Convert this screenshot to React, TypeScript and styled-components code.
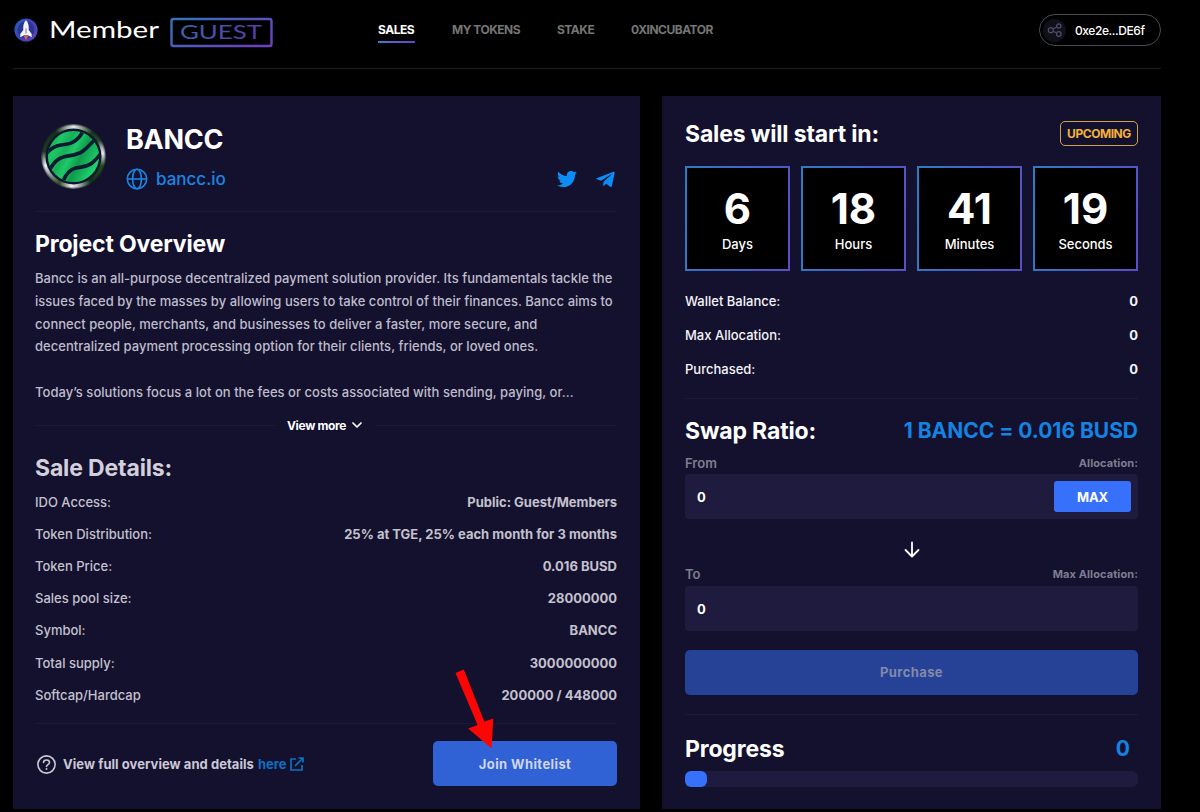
import React from "react";
import styled, { createGlobalStyle } from "styled-components";
import { FaTwitter, FaTelegramPlane } from "react-icons/fa";

const Global = createGlobalStyle`
  * { box-sizing: border-box; }
  body { margin: 0; background: #000; color: #fff; font-family: Inter, "Liberation Sans", sans-serif; overflow: hidden; }
  button { font-family: inherit; border: 0; }
  h1, h2, p { margin: 0; }
  svg { display: block; flex: none; }
`;

const Page = styled.div`
  width: 1200px;
  height: 812px;
  padding: 0 39px 0 13px;
`;

const Header = styled.header`
  height: 69px;
  display: flex;
  align-items: flex-start;
  border-bottom: 1px solid #1d1d1f;
`;

const Brand = styled.div`
  width: 365px;
  padding-top: 13px;
  display: flex;
`;

const Nav = styled.nav`
  flex: 1;
  display: flex;
  gap: 37px;
  padding-top: 20px;
`;

const NavItem = styled.a<{ $active?: boolean; $w: number }>`
  width: ${(p) => p.$w}px;
  white-space: nowrap;
  font-size: 12px;
  letter-spacing: -0.5px;
  line-height: 20px;
  font-weight: 700;
  color: ${(p) => (p.$active ? "#fff" : "#757575")};
  &::after {
    content: "";
    display: ${(p) => (p.$active ? "block" : "none")};
    height: 2px;
    margin-top: 1px;
    background: linear-gradient(90deg, #3b7fd0, #6a3fd0);
  }
`;

const Wallet = styled.div`
  width: 122px;
  height: 32px;
  margin-top: 14px;
  padding-left: 3px;
  display: flex;
  align-items: center;
  gap: 9px;
  border: 1px solid #4a4a52;
  border-radius: 16px;
  font-size: 12px;
  font-weight: 500;
  letter-spacing: -0.42px;
`;

const WalletIcon = styled.span`
  width: 23px;
  height: 23px;
  border-radius: 50%;
  background: #10101a;
  display: grid;
  place-items: center;
`;

const Main = styled.main`
  display: grid;
  grid-template-columns: 627px 499px;
  justify-content: space-between;
  padding-top: 27px;
`;

const Panel = styled.section<{ $pad: string }>`
  height: 713px;
  padding: ${(p) => p.$pad};
  background: #14112f;
  display: flex;
  flex-direction: column;
`;

const Divider = styled.hr<{ $top?: number }>`
  width: 100%;
  height: 1px;
  margin: ${(p) => p.$top ?? 0}px 0 0;
  border: 0;
  background: #1d1a38;
`;

const Heading = styled.h2<{ $dim?: boolean; $top?: number }>`
  margin-top: ${(p) => p.$top ?? 0}px;
  font-size: 23px;
  letter-spacing: -0.15px;
  line-height: 30px;
  font-weight: 700;
  white-space: nowrap;
  color: ${(p) => (p.$dim ? "#d3d0dc" : "#fff")};
`;

const Project = styled.div`
  height: 115px;
  padding: 28px 0 0 6px;
  display: flex;
`;

const CoinRim = styled.div`
  width: 65px;
  height: 65px;
  display: grid;
  place-items: center;
  border-radius: 50%;
  background: radial-gradient(closest-side, transparent 93%, rgba(20, 17, 47, 0.75) 100%), conic-gradient(
    #e8eae8 0deg, #9fab9e 14deg, #17391a 38deg, #254a28 58deg, #b4b8b6 74deg, #e6e6ea 84deg, #264a22 108deg,
    #103014 145deg, #a5aea4 168deg, #f2f2f2 184deg, #31552c 208deg, #8f9a90 232deg, #f2f2f4 252deg,
    #1d3a20 280deg, #163018 325deg, #9fab9e 346deg, #e8eae8 360deg
  );
`;

const ProjectText = styled.div`
  flex: 1;
  padding-left: 20px;
`;

const ProjectName = styled.h1`
  font-size: 27px;
  letter-spacing: -0.25px;
  line-height: 32px;
  font-weight: 700;
`;

const LinkRow = styled.div`
  display: flex;
  align-items: center;
  height: 24px;
  margin-top: 11px;
  color: #1a86e3;
`;

const Site = styled.a`
  flex: 1;
  padding-left: 8px;
  font-size: 17px;
  font-weight: 500;
`;

const Socials = styled.div`
  display: flex;
  gap: 18px;
  padding-right: 1px;
  color: #0c8df5;
`;

const Copy = styled.p`
  height: 122px;
  margin-top: 8px;
  font-size: 13px;
  letter-spacing: 0.03px;
  line-height: 22.75px;
  font-weight: 500;
  color: #bfbcca;
  white-space: pre;
`;

const MoreRow = styled.div`
  height: 24px;
  margin-top: 24px;
  display: grid;
  grid-template-columns: 240px 1fr 242px;
  align-items: center;
`;

const More = styled.button`
  padding: 0 0 0 12px;
  display: flex;
  align-items: center;
  gap: 6px;
  background: none;
  color: #fff;
  font-size: 12px;
  font-weight: 700;
  letter-spacing: -0.35px;
  white-space: nowrap;
`;

const Details = styled.dl<{ $top: number }>`
  margin: ${(p) => p.$top}px 0 0;
`;

const Detail = styled.div<{ $h: number; $dim?: boolean }>`
  height: ${(p) => p.$h}px;
  display: flex;
  align-items: center;
  justify-content: space-between;
  font-size: 13px;
  color: ${(p) => (p.$dim ? "#c4c1ce" : "#f4f4f8")};
  dt { font-weight: 500; }
  dd { margin: 0; font-weight: 700; }
`;

const PanelFoot = styled.div`
  margin-top: 17px;
  display: flex;
  align-items: center;
  justify-content: space-between;
`;

const Help = styled.div`
  display: flex;
  align-items: center;
  padding: 2px 0 0 2px;
  font-size: 13px;
  font-weight: 700;
  color: #cbc8d5;
  a { color: #0f6fc0; margin: 0 4px 0 4px; }
  span { margin-left: 7px; letter-spacing: 0.05px; }
`;

const JoinWrap = styled.div`
  position: relative;
`;

const Pointer = styled.svg`
  position: absolute;
  left: 21px;
  top: -73px;
`;

const Action = styled.button<{ $w: string; $disabled?: boolean; $top?: number }>`
  display: block;
  width: ${(p) => p.$w};
  height: 45px;
  margin-top: ${(p) => p.$top ?? 0}px;
  padding: ${(p) => (p.$disabled ? "0 0 1px" : "1px 0 0")};
  border-radius: 5px;
  font-size: 13px;
  font-weight: 700;
  letter-spacing: 0.4px;
  background: ${(p) => (p.$disabled ? "#254297" : "#3061d5")};
  color: ${(p) => (p.$disabled ? "#8488ab" : "#d0d6ee")};
`;

const Split = styled.div<{ $top: number }>`
  margin-top: ${(p) => p.$top}px;
  display: flex;
  align-items: center;
  justify-content: space-between;
`;

const Badge = styled.span`
  width: 78px;
  height: 25px;
  margin-bottom: 1px;
  display: grid;
  place-items: center;
  border: 1px solid #d3a14b;
  border-radius: 5px;
  color: #f5b13d;
  font-size: 12px;
  font-weight: 700;
  letter-spacing: -0.45px;
`;

const Clock = styled.div`
  margin-top: 17px;
  display: grid;
  grid-template-columns: repeat(4, 105px);
  justify-content: space-between;
`;

const Tile = styled.div`
  height: 105px;
  padding-top: 17px;
  border: 2px solid transparent;
  background: linear-gradient(#000, #000) padding-box, linear-gradient(100deg, #2f7cc2, #5a4ec6) border-box;
  text-align: center;
  strong { display: block; font-size: 42px; line-height: 48px; font-weight: 700; }
  span { display: block; margin-top: 1px; font-size: 13px; line-height: 20px; font-weight: 500; }
`;

const Ratio = styled.span<{ $pad?: number }>`
  padding-right: ${(p) => p.$pad ?? 0}px;
  font-size: 21px;
  line-height: 30px;
  font-weight: 700;
  letter-spacing: -0.03px;
  color: #1583e0;
`;

const FieldLabel = styled.div<{ $top: number }>`
  margin-top: ${(p) => p.$top}px;
  height: 20px;
  display: flex;
  align-items: center;
  justify-content: space-between;
  color: #7f7d91;
  font-size: 13px;
  font-weight: 600;
  small { font-size: 11px; font-weight: 700; letter-spacing: 0.1px; }
`;

const Field = styled.div<{ $top: number }>`
  height: 45px;
  margin-top: ${(p) => p.$top}px;
  padding: 0 7px 0 12px;
  display: flex;
  align-items: center;
  justify-content: space-between;
  border-radius: 4px;
  background: #1e1b3e;
  font-size: 13px;
  font-weight: 700;
`;

const Max = styled.button`
  width: 77px;
  height: 31px;
  border-radius: 3px;
  background: #3771fb;
  color: #fff;
  font-size: 13px;
  font-weight: 700;
  letter-spacing: -0.2px;
`;

const ArrowRow = styled.div`
  height: 45px;
  padding-top: 22px;
  display: flex;
  justify-content: center;
`;

const Track = styled.div`
  height: 16px;
  margin-top: 7px;
  border-radius: 6px;
  background: #1e1b3e;
`;

const Fill = styled.div`
  width: 22px;
  height: 16px;
  border-radius: 6px;
  background: #3771fb;
`;

const Logo = () => (
  <svg width="265" height="42" viewBox="13 13 265 42">
    <defs>
      <linearGradient id="brand" x1="0" x2="1" y1="0" y2="0.6">
        <stop offset="0" stopColor="#3474bd" />
        <stop offset="1" stopColor="#6a43c0" />
      </linearGradient>
      <linearGradient id="badge" x1="0" x2="1" y1="0" y2="0.6">
        <stop offset="0" stopColor="#1f63c0" />
        <stop offset="0.6" stopColor="#3c3fb4" />
        <stop offset="1" stopColor="#5a45b8" />
      </linearGradient>
      <linearGradient id="brandText" gradientUnits="userSpaceOnUse" x1="180" x2="262" y1="20" y2="40">
        <stop offset="0" stopColor="#3765a8" />
        <stop offset="1" stopColor="#5a3aa8" />
      </linearGradient>
    </defs>
    <circle cx="26" cy="30" r="11.6" fill="url(#badge)" />
    <circle cx="26" cy="30" r="8.4" fill="#2c3390" />
    <path d="M26 20c2.600 3 3 6.500 2.700 10l3 4v3.300l-3.800-2h-3.800l-3.800 2v-3.300l3-4C23 26.500 23.400 23 26 20z" fill="#f3f3f7" />
    <path d="M26 28.500v5" stroke="#6d7397" strokeWidth="1" />
    <path d="M23.400 35.400h5.200L26 40z" fill="#e2614b" />
    <text x="49" y="38" textLength="110" lengthAdjust="spacingAndGlyphs" fill="#fff" fontFamily="Lato, sans-serif" fontSize="23">Member</text>
    <rect x="171.500" y="19" width="100" height="27" rx="2" fill="none" stroke="url(#brand)" strokeWidth="2.400" />
    <text x="180" y="38.500" textLength="82" lengthAdjust="spacingAndGlyphs" fill="url(#brandText)" fontFamily="Lato, sans-serif" fontSize="19">GUEST</text>
  </svg>
);

const Coin = () => (
  <CoinRim>
    <svg width="57" height="57" viewBox="4 4 57 57">
      <defs>
        <linearGradient id="green" x1="0" y1="0" x2="1" y2="0.5">
          <stop offset="0" stopColor="#0c8a44" />
          <stop offset="0.25" stopColor="#1fc768" />
          <stop offset="0.42" stopColor="#16b058" />
          <stop offset="0.55" stopColor="#1fc96a" />
          <stop offset="0.72" stopColor="#109a4b" />
          <stop offset="1" stopColor="#1ed06c" />
        </linearGradient>
        <clipPath id="coinClip"><circle cx="32.500" cy="32.500" r="25.600" /></clipPath>
      </defs>
      <circle cx="32.500" cy="32.500" r="28" fill="#0b1730" />
      <circle cx="32.500" cy="32.500" r="25.600" fill="url(#green)" />
      <g clipPath="url(#coinClip)" fill="none" stroke="#0a1a30" strokeWidth="3.600">
        <path d="M5 30c4-5 8-8 15-9s9-.5 14-4 7-7 9.500-13" />
        <path d="M8 47c5-9 9-13 16-14.500s12-1 18-5.500 8-8 12.500-12" />
        <path d="M21 60c3-9 7-14.500 14-16s11-1 16-5 6-6 9-10" />
      </g>
    </svg>
  </CoinRim>
);

const Globe = () => (
  <svg width="22" height="22" viewBox="0 0 22 22" fill="none" stroke="currentColor" strokeWidth="1.600">
    <circle cx="11" cy="11" r="9.700" />
    <ellipse cx="11" cy="11" rx="4.400" ry="9.700" />
    <path d="M1.500 11h19" />
  </svg>
);

const details = [
  ["IDO Access:", "Public: Guest/Members"],
  ["Token Distribution:", "25% at TGE, 25% each month for 3 months"],
  ["Token Price:", "0.016 BUSD"],
  ["Sales pool size:", "28000000"],
  ["Symbol:", "BANCC"],
  ["Total supply:", "3000000000"],
  ["Softcap/Hardcap", "200000 / 448000"],
];

const overview = `Bancc is an all-purpose decentralized payment solution provider. Its fundamentals tackle the
issues faced by the masses by allowing users to take control of their finances. Bancc aims to
connect people, merchants, and businesses to deliver a faster, more secure, and
decentralized payment processing option for their clients, friends, or loved ones.

Today’s solutions focus a lot on the fees or costs associated with sending, paying, or...`;

export default function App() {
  return (
    <Page>
      <Global />
      <Header>
        <Brand><Logo /></Brand>
        <Nav>
          <NavItem $active $w={37}>SALES</NavItem>
          <NavItem $w={68}>MY TOKENS</NavItem>
          <NavItem $w={37}>STAKE</NavItem>
          <NavItem $w={82}>0XINCUBATOR</NavItem>
        </Nav>
        <Wallet>
          <WalletIcon>
            <svg width="16" height="16" viewBox="0 0 16 16" fill="none" stroke="#4f4f68" strokeWidth="1.200">
              <circle cx="3.800" cy="8.200" r="2.500" />
              <circle cx="11.800" cy="4" r="2.100" />
              <circle cx="11.800" cy="12" r="2.300" />
              <path d="M6 7l3.800-2M6 9.300l3.700 1.700" />
            </svg>
          </WalletIcon>
          0xe2e...DE6f
        </Wallet>
      </Header>
      <Main>
        <Panel $pad="0 23px 0 22px">
          <Project>
            <Coin />
            <ProjectText>
              <ProjectName>BANCC</ProjectName>
              <LinkRow>
                <Globe />
                <Site>bancc.io</Site>
                <Socials>
                  <FaTwitter size={20} />
                  <FaTelegramPlane size={21} />
                </Socials>
              </LinkRow>
            </ProjectText>
          </Project>
          <Divider />
          <Heading $top={17}>Project Overview</Heading>
          <Copy>{overview}</Copy>
          <MoreRow>
            <Divider />
            <More>
              View more
              <svg width="10" height="8" viewBox="0 0 10 8" fill="none" stroke="#fff" strokeWidth="1.700" strokeLinecap="round" strokeLinejoin="round"><path d="M1 2l4 4 4-4" /></svg>
            </More>
            <Divider />
          </MoreRow>
          <Heading $dim $top={16}>Sale Details:</Heading>
          <Details $top={3}>
            {details.map(([label, value]) => (
              <Detail key={label} $h={32.1} $dim><dt>{label}</dt><dd>{value}</dd></Detail>
            ))}
          </Details>
          <Divider $top={12} />
          <PanelFoot>
            <Help>
              <svg width="19" height="19" viewBox="0 0 19 19" fill="none" stroke="currentColor" strokeWidth="1.600" strokeLinecap="round">
                <circle cx="9.500" cy="9.500" r="8.600" />
                <path d="M6.500 7.500c.2-3.500 6-3.300 6 0 0 2.200-3 2-3 4" />
                <path d="M9.500 14h.01" strokeWidth="1.900" />
              </svg>
              <span>View full overview and details</span>
              <a>here</a>
              <svg width="14" height="14" viewBox="0 0 14 14" fill="none" stroke="#0f6fc0" strokeWidth="1.700"><path d="M6 2H1v11h11V8M8.500 1H13v4.500M13 1L5 9" /></svg>
            </Help>
            <JoinWrap>
              <Action $w="184px">Join Whitelist</Action>
              <Pointer width="42" height="80" viewBox="454 668 42 80">
                <path d="M455.500 673l8.300-3.500 20.500 52 9-3-1.700 30-23.500-20 9.500-3.500z" fill="#fb0505" />
              </Pointer>
            </JoinWrap>
          </PanelFoot>
        </Panel>
        <Panel $pad="0 23px">
          <Split $top={23}>
            <Heading>Sales will start in:</Heading>
            <Badge>UPCOMING</Badge>
          </Split>
          <Clock>
            <Tile><strong>6</strong><span>Days</span></Tile>
            <Tile><strong>18</strong><span>Hours</span></Tile>
            <Tile><strong>41</strong><span>Minutes</span></Tile>
            <Tile><strong>19</strong><span>Seconds</span></Tile>
          </Clock>
          <Details $top={13}>
            <Detail $h={34}><dt>Wallet Balance:</dt><dd>0</dd></Detail>
            <Detail $h={34}><dt>Max Allocation:</dt><dd>0</dd></Detail>
            <Detail $h={34}><dt>Purchased:</dt><dd>0</dd></Detail>
          </Details>
          <Divider $top={12} />
          <Split $top={17}>
            <Heading>Swap Ratio:</Heading>
            <Ratio>1 BANCC = 0.016 BUSD</Ratio>
          </Split>
          <FieldLabel $top={7}>From<small>Allocation:</small></FieldLabel>
          <Field $top={1}>0<Max>MAX</Max></Field>
          <ArrowRow>
            <svg width="16" height="17" viewBox="0 0 16 17" fill="none" stroke="#fff" strokeWidth="1.800" strokeLinecap="round" strokeLinejoin="round"><path d="M8 1.500v14M1.500 9L8 15.500 14.500 9" /></svg>
          </ArrowRow>
          <FieldLabel $top={0}>To<small>Max Allocation:</small></FieldLabel>
          <Field $top={2}>0</Field>
          <Action $w="100%" $disabled $top={19}>Purchase</Action>
          <Divider $top={19} />
          <Split $top={19}>
            <Heading>Progress</Heading>
            <Ratio $pad={8}>0</Ratio>
          </Split>
          <Track><Fill /></Track>
        </Panel>
      </Main>
    </Page>
  );
}
